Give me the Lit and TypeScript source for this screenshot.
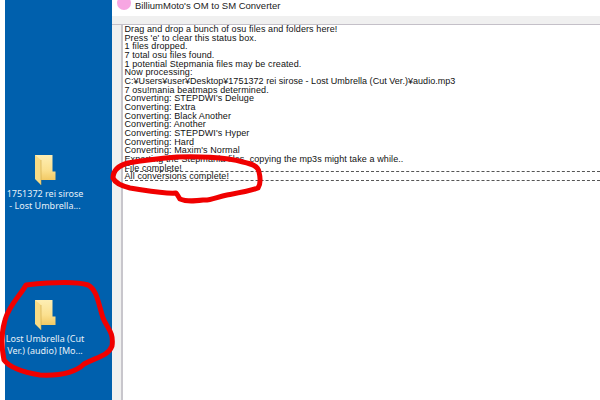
import { LitElement, html, css, svg } from "lit";
import { customElement } from "lit/decorators.js";

const LINES = [
  "Drag and drop a bunch of osu files and folders here!",
  "Press 'e' to clear this status box.",
  "1 files dropped.",
  "7 total osu files found.",
  "1 potential Stepmania files may be created.",
  "Now processing:",
  "7 osu!mania beatmaps determined.",
  "Converting: STEPDWI's Deluge",
  "Converting: Extra",
  "Converting: Black Another",
  "Converting: Another",
  "Converting: STEPDWI's Hyper",
  "Converting: Hard",
  "Converting: Maxim's Normal",
  "Exporting the Stepmania files, copying the mp3s might take a while..",
];

function folder() {
  return html`<svg class="folder" viewBox="0 0 21 30" width="21" height="30">
    <defs>
      <linearGradient id="fg" x1="0" y1="0" x2="0" y2="1">
        <stop offset="0" stop-color="#fdeeb4"/>
        <stop offset="0.6" stop-color="#fbe08f"/>
        <stop offset="1" stop-color="#f2c964"/>
      </linearGradient>
    </defs>
    <path d="M0 0H17.5V16.5H20.5V25H6V24H0Z" fill="url(#fg)"/>
    <path d="M0 0L6 5V30L0 24Z" fill="#f8dc86"/>
    <path d="M6 5V30" stroke="#c9a648" stroke-width="0.6"/>
  </svg>`;
}

@customElement("app-root")
export class AppRoot extends LitElement {
  static styles = css`
    :host { display: block; width: 600px; height: 400px; position: relative; overflow: hidden; background: #fff; font-family: "Liberation Sans", sans-serif; }
    .page { display: flex; height: 400px; }
    .edge { width: 5px; background: #fff; }
    .desktop { width: 107px; background: #0060ad; display: flex; flex-direction: column; align-items: flex-start; padding-top: 155px; box-sizing: border-box; gap: 88px; }
    .icon { display: flex; flex-direction: column; align-items: center; width: 80px; gap: 3px; }
    .icon span { color: #e6f0f8; font-family: "Noto Sans", sans-serif; font-size: 9px; line-height: 12px; text-align: center; width: 80px; white-space: nowrap; }
    .window { flex: 1; display: flex; flex-direction: column; min-width: 0; }
    .title { height: 16px; display: flex; gap: 4px; padding-left: 5px; background: #fff; font-size: 9.5px; color: #222; overflow: hidden; }
    .dot { width: 14px; height: 14px; margin-top: -4px; border-radius: 50%; background: #f7a6e2; flex: none; }
    .title span { line-height: 11px; }
    .bar { height: 8px; background: #f0f0f0; border-bottom: 1px solid #c4c0c8; }
    .body { flex: 1; display: flex; min-height: 0; }
    .gutter { width: 9px; background: #f0f0f0; border-right: 2px solid #c8c6cc; }
    .log { flex: 1; padding-left: 1.5px; font-size: 9px; line-height: 8.68px; letter-spacing: 0.1px; color: #111; white-space: nowrap; overflow: hidden; }
    .log div { height: 8.68px; }
    .log .path { letter-spacing: 0.035px; }
    .sep { border-bottom: 1px dashed #555; box-sizing: border-box; }
    .ink { position: absolute; inset: 0; pointer-events: none; }
    .ink path { fill: none; stroke: #f00000; stroke-width: 5; stroke-linecap: round; stroke-linejoin: round; }
  `;

  render() {
    return html`<div class="page">
      <div class="edge"></div>
      <div class="desktop">
        <div class="icon">${folder()}<span>1751372 rei sirose<br />- Lost Umbrella...</span></div>
        <div class="icon">${folder()}<span>Lost Umbrella (Cut<br />Ver.) (audio) [Mo...</span></div>
      </div>
      <div class="window">
        <div class="title"><div class="dot"></div><span>BilliumMoto's OM to SM Converter</span></div>
        <div class="bar"></div>
        <div class="body">
          <div class="gutter"></div>
          <div class="log">
            ${LINES.slice(0, 6).map((l) => html`<div>${l}</div>`)}
            <div class="path">C:¥Users¥user¥Desktop¥1751372 rei sirose - Lost Umbrella (Cut Ver.)¥audio.mp3</div>
            ${LINES.slice(6).map((l) => html`<div>${l}</div>`)}
            <div class="sep">File complete!</div>
            <div class="sep">All conversions complete!</div>
          </div>
        </div>
      </div>
    </div>
    <svg class="ink" viewBox="0 0 600 400" width="600" height="400">
      ${svg`<path d="M26 285C45 283 75 281 88 285C97 290 98 302 103 318C107 328 114 332 112 346C108 356 97 357 84 364C76 372 62 376 40 375C22 372 10 368 4 360C1 345 2 330 5 320C9 305 20 296 26 285Z"/>
      <path d="M128 163C140 161 155 159 177 157C195 156 225 157 243 162C252 164 258 166 259 172C261 180 260 185 258 188C250 191 238 193 227 195C217 197 210 201 203 200C195 201 187 202 180 199C178 196 177 194 176 193C165 194 150 191 130 188C122 186 115 183 113 178C113 172 117 166 128 163Z"/>`}
    </svg>`;
  }
}
